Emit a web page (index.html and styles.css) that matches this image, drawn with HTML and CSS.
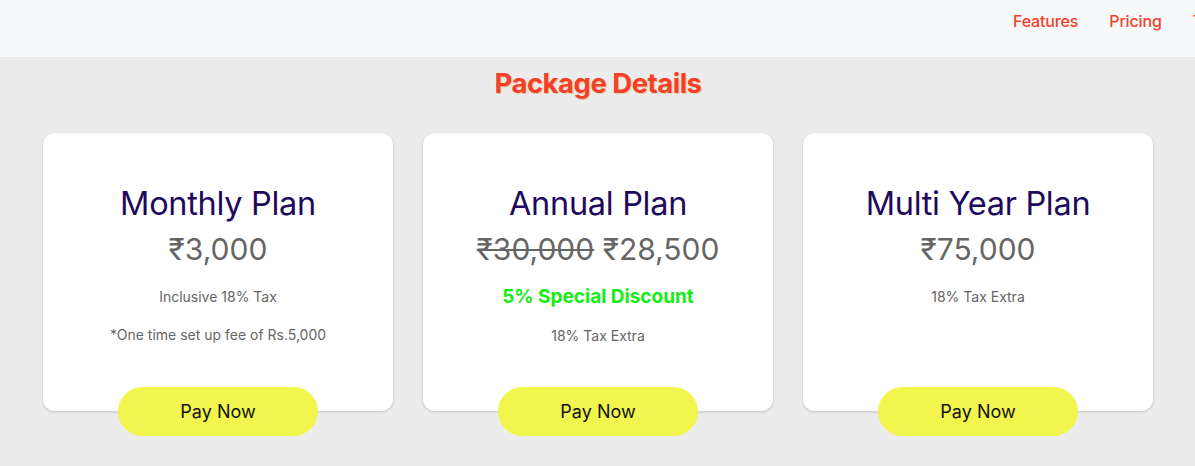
FILE: index.html
```html
<!DOCTYPE html>
<html lang="en">
<head>
<meta charset="utf-8">
<title>Package Details</title>
<link rel="stylesheet" href="styles.css">
</head>
<body>
<header class="header">
  <nav class="nav">
    <a href="#" class="nav-link">Features</a>
    <a href="#" class="nav-link">Pricing</a>
    <a href="#" class="nav-link">Testimonials</a>
    <a href="#" class="nav-link">Contact</a>
  </nav>
</header>
<main class="main">
  <h1 class="section-title">Package Details</h1>
  <div class="cards">
    <div class="card">
      <h2 class="plan-name">Monthly Plan</h2>
      <div class="price">₹3,000</div>
      <p class="note">Inclusive 18% Tax</p>
      <p class="note">*One time set up fee of Rs.5,000</p>
      <button class="pay-btn">Pay Now</button>
    </div>
    <div class="card">
      <h2 class="plan-name">Annual Plan</h2>
      <div class="price"><s class="old">₹30,000</s> ₹28,500</div>
      <p class="discount">5% Special Discount</p>
      <p class="note">18% Tax Extra</p>
      <button class="pay-btn">Pay Now</button>
    </div>
    <div class="card">
      <h2 class="plan-name">Multi Year Plan</h2>
      <div class="price">₹75,000</div>
      <p class="note">18% Tax Extra</p>
      <button class="pay-btn">Pay Now</button>
    </div>
  </div>
</main>
</body>
</html>
```
FILE: styles.css
```css
* { box-sizing: border-box; }
html, body { margin: 0; padding: 0; }
body {
  background: #ececec;
  font-family: Inter, "Noto Sans", "DejaVu Sans", sans-serif;
  min-height: 466px;
}
.header {
  height: 57px;
  background: #f8f9fa;
  overflow: hidden;
  white-space: nowrap;
}
.nav {
  display: flex;
  gap: 31px;
  padding-left: 1013px;
  padding-top: 11px;
}
.nav-link {
  color: #f4402b;
  text-decoration: none;
  font-size: 16px;
  font-weight: 500;
  line-height: 20px;
  letter-spacing: -0.15px;
}
.main {
  padding: 0 42px 40px 43px;
}
.section-title {
  margin: 0;
  padding-top: 9px;
  text-align: center;
  font-size: 27.5px;
  line-height: 34px;
  font-weight: 700;
  color: #f4402b;
  letter-spacing: -0.5px;
  text-shadow: 1px 1px 1px rgba(200, 170, 60, 0.45);
}
.cards {
  display: grid;
  grid-template-columns: repeat(3, 350px);
  gap: 30px;
  margin-top: 33px;
}
.card {
  position: relative;
  height: 278px;
  background: #fff;
  border-radius: 12px;
  box-shadow: 0 1px 3px rgba(0, 0, 0, 0.18);
  text-align: center;
  padding-top: 51px;
}
.plan-name {
  margin: 0;
  font-size: 32.5px;
  line-height: 40px;
  font-weight: 400;
  color: #1e0a5c;
  letter-spacing: -0.3px;
}
.price {
  margin-top: 7px;
  font-size: 30px;
  line-height: 36px;
  color: #666;
}
.old { color: #666; text-decoration-thickness: 2px; }
.note {
  margin: 16px 0 0;
  font-size: 14px;
  line-height: 22px;
  color: #666;
}
.price + .note { margin-top: 19px; }
.price + .discount { margin-top: 18px; }
.discount {
  margin: 0;
  font-size: 19px;
  line-height: 24px;
  font-weight: 700;
  color: #12ee12;
}
.pay-btn {
  position: absolute;
  left: 50%;
  bottom: -25px;
  transform: translateX(-50%);
  width: 200px;
  height: 49px;
  border: 0;
  border-radius: 25px;
  background: #f2f54d;
  font-family: inherit;
  font-size: 18px;
  line-height: 47px;
  padding: 0;
  color: #111;
  cursor: pointer;
}
```
